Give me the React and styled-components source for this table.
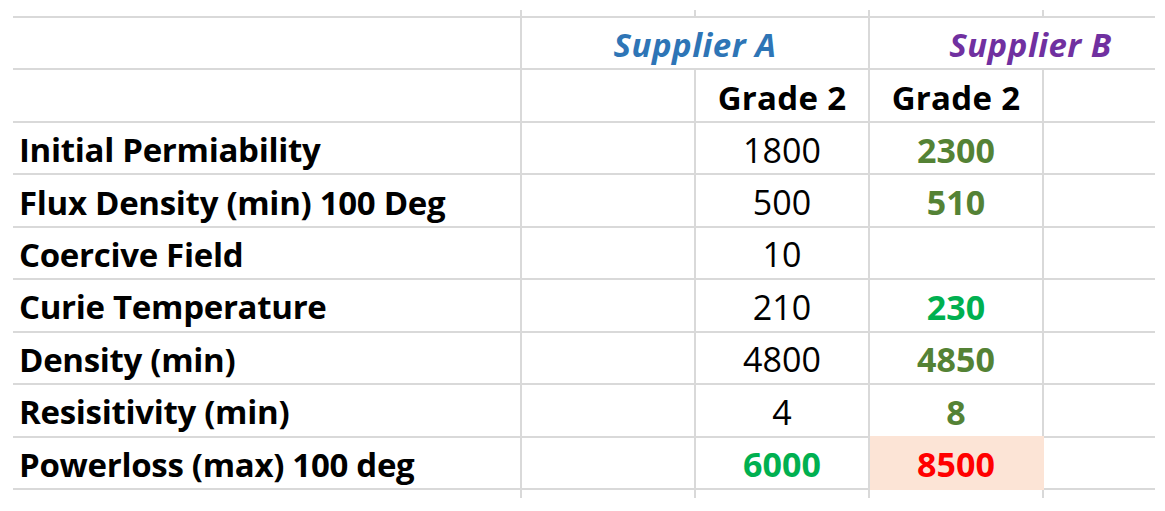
import React from "react";
import styled, { createGlobalStyle } from "styled-components";

const rows = [
  { label: "Initial Permiability", a: "1800", b: "2300", bTone: "olive" },
  { label: "Flux Density (min) 100 Deg", a: "500", b: "510", bTone: "olive" },
  { label: "Coercive Field", a: "10", b: "" },
  { label: "Curie Temperature", a: "210", b: "230", bTone: "green" },
  { label: "Density (min)", a: "4800", b: "4850", bTone: "olive" },
  { label: "Resisitivity (min)", a: "4", b: "8", bTone: "olive" },
  {
    label: "Powerloss (max) 100 deg",
    a: "6000",
    aTone: "green",
    b: "8500",
    bTone: "red",
    bFill: true,
  },
];

const tones = {
  olive: "#548235",
  green: "#00b050",
  red: "#ff0000",
};

export default function App() {
  return (
    <>
      <GlobalStyle />
      <Page>
        <Sheet>
          <Stub />
          <Stub />
          <Stub />
          <Stub />
          <Stub $last />

          <Cell />
          <Cell $span={2} $align="center">
            <Supplier $color="#2e75b6">Supplier A</Supplier>
          </Cell>
          <Cell $span={2} $last $align="center" $shift={36}>
            <Supplier $color="#7030a0">Supplier B</Supplier>
          </Cell>

          <Cell />
          <Cell />
          <Cell $align="center">
            <Heading $wide>Grade 2</Heading>
          </Cell>
          <Cell $align="center">
            <Heading $wide>Grade 2</Heading>
          </Cell>
          <Cell $last />

          {rows.map((r) => (
            <React.Fragment key={r.label}>
              <Cell $label>
                <Heading>{r.label}</Heading>
              </Cell>
              <Cell />
              <Cell $align="center">
                <Value $tone={r.aTone}>{r.a}</Value>
              </Cell>
              <Cell $align="center" $fill={r.bFill}>
                <Value $tone={r.bTone}>{r.b}</Value>
              </Cell>
              <Cell $last />
            </React.Fragment>
          ))}

          <Stub $bottom />
          <Stub $bottom />
          <Stub $bottom />
          <Stub $bottom />
          <Stub $bottom $last />
        </Sheet>
      </Page>
    </>
  );
}

const GlobalStyle = createGlobalStyle`
  html, body {
    margin: 0;
    background: #ffffff;
  }
  body {
    font-family: "Open Sans", "Liberation Sans", sans-serif;
    overflow: hidden;
  }
`;

const Page = styled.div`
  width: 1165px;
  height: 511px;
  padding: 10px 10px 0 13px;
  box-sizing: border-box;
`;

const Sheet = styled.div`
  display: grid;
  grid-template-columns: 509px 174px 174px 174px 1fr;
  grid-template-rows: 8px repeat(9, 52.45px) 8px;
`;

const Stub = styled.div`
  box-sizing: border-box;
  border-right: ${(p) => (p.$last ? "none" : "2px solid #d9d9d9")};
  border-bottom: ${(p) => (p.$bottom ? "none" : "2px solid #d9d9d9")};
`;

const Cell = styled.div`
  box-sizing: border-box;
  grid-column: span ${(p) => p.$span || 1};
  display: flex;
  align-items: center;
  justify-content: ${(p) => (p.$align === "center" ? "center" : "flex-start")};
  padding: 3px 0 0 ${(p) => (p.$label ? "6px" : p.$shift ? `${p.$shift}px` : "0")};
  border-right: ${(p) => (p.$last ? "none" : "2px solid #d9d9d9")};
  border-bottom: 2px solid #d9d9d9;
  background: ${(p) => (p.$fill ? "#fce4d6" : "transparent")};
  ${(p) =>
    p.$fill &&
    `
    border-color: #fce4d6;
    box-shadow: 0 -2px 0 #fce4d6;
  `}
  white-space: nowrap;
`;

const Heading = styled.span`
  font-size: 33px;
  font-weight: 700;
  color: #000000;
  letter-spacing: ${(p) => (p.$wide ? "0.3px" : "-0.3px")};
`;

const Supplier = styled.span`
  font-size: 33px;
  font-weight: 700;
  font-style: italic;
  color: ${(p) => p.$color};
  letter-spacing: 0.5px;
`;

const Value = styled.span`
  font-size: 34px;
  font-weight: ${(p) => (p.$tone ? 700 : 400)};
  color: ${(p) => (p.$tone ? tones[p.$tone] : "#000000")};
`;
